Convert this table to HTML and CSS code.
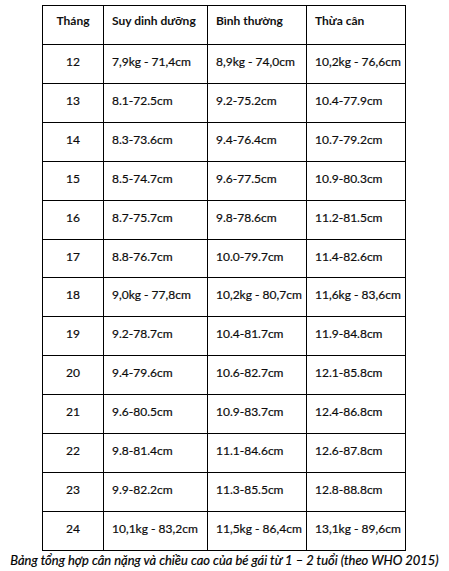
FILE: index.html
```
<!DOCTYPE html>
<html lang="vi">
<head>
<meta charset="utf-8">
<link rel="stylesheet" href="styles.css">
</head>
<body>
<div class="wrap">
<table class="who">
<thead>
<tr><th class="m">Tháng</th><th>Suy dinh dưỡng</th><th>Bình thường</th><th>Thừa cân</th></tr>
</thead>
<tbody>
<tr><td class="m">12</td><td>7,9kg - 71,4cm</td><td>8,9kg - 74,0cm</td><td>10,2kg - 76,6cm</td></tr>
<tr><td class="m">13</td><td>8.1-72.5cm</td><td>9.2-75.2cm</td><td>10.4-77.9cm</td></tr>
<tr><td class="m">14</td><td>8.3-73.6cm</td><td>9.4-76.4cm</td><td>10.7-79.2cm</td></tr>
<tr><td class="m">15</td><td>8.5-74.7cm</td><td>9.6-77.5cm</td><td>10.9-80.3cm</td></tr>
<tr><td class="m">16</td><td>8.7-75.7cm</td><td>9.8-78.6cm</td><td>11.2-81.5cm</td></tr>
<tr><td class="m">17</td><td>8.8-76.7cm</td><td>10.0-79.7cm</td><td>11.4-82.6cm</td></tr>
<tr><td class="m">18</td><td>9,0kg - 77,8cm</td><td>10,2kg - 80,7cm</td><td>11,6kg - 83,6cm</td></tr>
<tr><td class="m">19</td><td>9.2-78.7cm</td><td>10.4-81.7cm</td><td>11.9-84.8cm</td></tr>
<tr><td class="m">20</td><td>9.4-79.6cm</td><td>10.6-82.7cm</td><td>12.1-85.8cm</td></tr>
<tr><td class="m">21</td><td>9.6-80.5cm</td><td>10.9-83.7cm</td><td>12.4-86.8cm</td></tr>
<tr><td class="m">22</td><td>9.8-81.4cm</td><td>11.1-84.6cm</td><td>12.6-87.8cm</td></tr>
<tr><td class="m">23</td><td>9.9-82.2cm</td><td>11.3-85.5cm</td><td>12.8-88.8cm</td></tr>
<tr><td class="m">24</td><td>10,1kg - 83,2cm</td><td>11,5kg - 86,4cm</td><td>13,1kg - 89,6cm</td></tr>
</tbody>
</table>
<p class="caption">Bảng tổng hợp cân nặng và chiều cao của bé gái từ 1 – 2 tuổi (theo WHO 2015)</p>
</div>
</body>
</html>
```
FILE: styles.css
```
html, body {
  margin: 0;
  padding: 0;
  background: #fff;
}
body {
  font-family: Lato, "Open Sans", "DejaVu Sans", sans-serif;
  color: #000;
  font-size: 12px;
}
.wrap {
  padding-top: 5px;
}
.who {
  border-collapse: collapse;
  table-layout: fixed;
  width: 364px;
  margin-left: 42px;
}
.who th, .who td {
  border: 1px solid #000;
  text-align: left;
  vertical-align: top;
  padding: 0 0 0 8px;
  line-height: 14px;
  white-space: nowrap;
  color: #111;
}
.who th {
  font-weight: 700;
  height: 39px;
  padding-top: 8px;
  box-sizing: border-box;
}
.who td {
  height: 38.92px;
  padding-top: 10px;
  box-sizing: border-box;
  -webkit-text-stroke: 0.2px #000;
}
.who th.m, .who td.m {
  text-align: center;
  padding-left: 0;
}
.who th:nth-child(1) { width: 61px; }
.who th:nth-child(2) { width: 104px; }
.who th:nth-child(3) { width: 99px; }
.who th:nth-child(4) { width: 99px; }
.caption {
  margin: 1px 0 0;
  font-style: italic;
  font-size: 12.95px;
  line-height: 16px;
  text-align: center;
  white-space: nowrap;
  -webkit-text-stroke: 0.2px #000;
}
```
